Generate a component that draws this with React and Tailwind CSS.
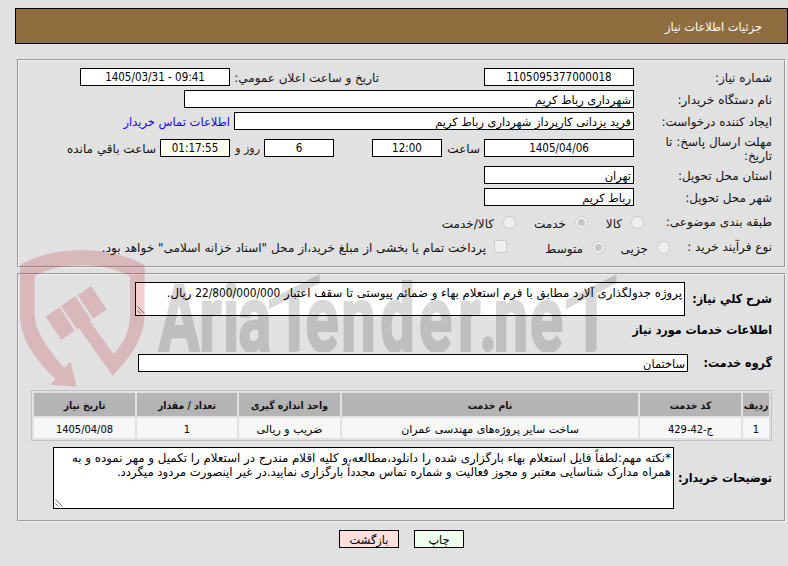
import clsx from 'clsx'

const columns = [
  { title: 'ردیف', value: '1', width: 'w-[26px]', numeric: true },
  { title: 'کد خدمت', value: 'ج-42-429', width: 'w-[101px]', numeric: true },
  { title: 'نام خدمت', value: 'ساخت سایر پروژه‌های مهندسی عمران', width: 'w-[296px]' },
  { title: 'واحد اندازه گیری', value: 'ضریب و ریالی', width: 'w-[101px]' },
  { title: 'تعداد / مقدار', value: '1', width: 'w-[100px]', numeric: true },
  { title: 'تاریخ نیاز', value: '1405/04/08', width: 'w-[101px]', numeric: true },
]

function Panel({ className, children }) {
  return (
    <div className={clsx('border border-t-[#9a9a9a] border-l-[#9a9a9a] border-b-[#f0f0f0] border-r-[#f0f0f0]', className)}>
      <div className="h-full border border-t-[#f0f0f0] border-l-[#f0f0f0] border-b-[#9a9a9a] border-r-[#9a9a9a] pr-3">
        {children}
      </div>
    </div>
  )
}

function Label({ className, children }) {
  return <div className={clsx('shrink-0 whitespace-nowrap', className || 'pt-[2px]')}>{children}</div>
}

function BoldLabel({ className, children }) {
  return (
    <div className={clsx("shrink-0 whitespace-nowrap font-['DejaVu_Sans_Condensed','DejaVu_Sans',sans-serif] text-[12.4px] font-bold text-black", className)}>
      {children}
    </div>
  )
}

function Field({ className, center, children }) {
  return (
    <div
      className={clsx(
        'h-[18px] shrink-0 border border-black text-black leading-[16px] whitespace-nowrap',
        center ? "text-center font-['DejaVu_Sans_Condensed','DejaVu_Sans',sans-serif] text-[11.5px]" : 'px-[2px] pt-px text-[11.4px]',
        className
      )}
    >
      {children}
    </div>
  )
}

function Radio({ checked }) {
  return (
    <span className="flex size-[13px] shrink-0 items-center justify-center rounded-full border border-[#cbcbcb] bg-[#efefef]">
      {checked && <span className="size-[7px] rounded-full bg-[#c6c6c6]" />}
    </span>
  )
}

function Grip() {
  return (
    <svg className="absolute bottom-px left-px" width="8" height="8" viewBox="0 0 8 8" stroke="#555" strokeWidth="0.8">
      <path d="M0.5 0.5L7.5 7.5M0.5 4.5L3.5 7.5" />
    </svg>
  )
}

function Watermark() {
  return (
    <svg className="pointer-events-none absolute inset-0" width="788" height="566" viewBox="0 0 788 566">
      <clipPath id="baseline">
        <rect x="150" y="265" width="480" height="87" />
      </clipPath>
      <g transform="translate(0 240) scale(0.33333)" fill="#b00010" fillOpacity="0.18">
        <path d="M60 75Q140 30 245 30Q350 30 434 75V225Q434 310 338 407L237 265L231 268L183 198L226 168L274 240L270 245L341 342Q390 290 390 225V108Q325 75 245 75Q165 75 104 108V225Q104 285 193 384L212 365L230 440L152 434L166 416Q60 320 60 225Z" />
        <path d="M137 230L179 202L224 272L184 300Z" />
        <path d="M233 166L273 137L320 208L280 236Z" />
      </g>
      <g
        opacity="0.15"
        clipPath="url(#baseline)"
        fill="#000"
        stroke="#000"
        strokeWidth="2.5"
        strokeLinejoin="round"
        direction="ltr"
        fontFamily="Roboto, 'Liberation Sans', sans-serif"
        fontWeight="700"
        fontSize="93"
      >
        <text transform="translate(0 350.5) scale(0.66 1)" x="240 302 338 361">Aria</text>
        <text transform="translate(267 367) skewY(-27) scale(0.96 1)" strokeWidth="0" fontWeight="500">T</text>
        <text transform="translate(0 350.5) scale(0.66 1)" x="463 517 576 635 694 726 748 803">ender.ne</text>
        <text transform="translate(564 367) skewY(-27) scale(0.96 1)" strokeWidth="0" fontWeight="500">T</text>
      </g>
    </svg>
  )
}

export default function App() {
  return (
    <div dir="rtl" className="relative h-[566px] w-[788px] overflow-hidden bg-[#e1e1e1] pt-2 font-['DejaVu_Sans',sans-serif] text-[12px] leading-[14px] text-[#111]">
      <div className="flex h-9 w-[773px] items-center border border-black bg-[#8f6d3f] pr-[25px] pt-[2px] text-[11.4px] text-white">
        جزئیات اطلاعات نیاز
      </div>

      {/* Request info */}
      <Panel className="mt-[15px] mr-[2px] h-[209px] w-[769px]">
        <div className="flex items-center pt-[7px]">
          <Label className="w-[138px] pt-px">شماره نیاز:</Label>
          <Field center className="w-[150px] bg-white">1105095377000018</Field>
          <Label className="mr-[105px] w-[149px] pt-px">تاریخ و ساعت اعلان عمومي:</Label>
          <Field center className="w-[150px] bg-white"><span dir="ltr">1405/03/31 - 09:41</span></Field>
        </div>
        <div className="mt-1 flex h-[18px] items-center">
          <Label className="w-[138px] pt-[2px]">نام دستگاه خریدار:</Label>
          <Field className="w-[450px] bg-white">شهرداری رباط کریم</Field>
        </div>
        <div className="mt-1 flex h-[18px] items-center">
          <Label className="w-[138px] pt-[2px]">ایجاد کننده درخواست:</Label>
          <Field className="w-[400px] bg-white">فرید یزدانی کارپرداز شهرداری رباط کریم</Field>
          <a className="mr-1 pt-[2px] whitespace-nowrap text-[11.5px] text-[#1a00ff]">اطلاعات تماس خریدار</a>
        </div>
        <div className="mt-[4px] flex h-[28px] items-center">
          <Label className="w-[138px] pt-[2px]">مهلت ارسال پاسخ: تا<br />تاریخ:</Label>
          <Field center className="w-[150px] bg-white">1405/04/06</Field>
          <Label className="mr-1 w-[38px] pt-[2px]">ساعت</Label>
          <Field center className="w-[70px] bg-white">12:00</Field>
          <Field center className="mr-[38px] w-[70px] bg-white">6</Field>
          <Label className="mr-1 w-[30px] pt-[2px] text-[11px]">روز و</Label>
          <Field center className="w-[70px] bg-[#fffff0]">01:17:55</Field>
          <Label className="mr-1 pt-[2px]">ساعت باقي مانده</Label>
        </div>
        <div className="mt-1 flex h-[18px] items-center">
          <Label className="w-[138px] pt-[2px]">استان محل تحویل:</Label>
          <Field className="w-[150px] bg-white">تهران</Field>
        </div>
        <div className="mt-1 flex h-[18px] items-center">
          <Label className="w-[138px] pt-[2px]">شهر محل تحویل:</Label>
          <Field className="w-[150px] bg-white">رباط کریم</Field>
        </div>
        <div className="mt-[6px] flex h-[20px] items-center">
          <Label className="w-[128px]">طبقه بندی موضوعی:</Label>
          <Radio />
          <Label className="mr-[9px] w-[34px] pt-1">کالا</Label>
          <Radio checked />
          <Label className="mr-[9px] w-[50px] pt-1">خدمت</Label>
          <Radio />
          <Label className="mr-[9px] pt-1">کالا/خدمت</Label>
        </div>
        <div className="mt-[5px] flex h-[20px] items-center">
          <Label className="w-[102px]">نوع فرآیند خرید :</Label>
          <Radio />
          <Label className="mr-[9px] w-[43px] pt-1">جزیی</Label>
          <Radio checked />
          <Label className="mr-[9px] w-[76px] pt-1">متوسط</Label>
          <span className="mb-[2px] size-[13px] rounded-[2px] border border-[#cbcbcb] bg-[#efefef]" />
          <Label className="mr-2 pt-[2px] text-[12.05px]">پرداخت تمام یا بخشی از مبلغ خرید،از محل "اسناد خزانه اسلامی" خواهد بود.</Label>
        </div>
      </Panel>

      {/* Services and buyer notes */}
      <Panel className="mt-[5px] mr-[2px] h-[249px] w-[769px]">
        <div className="flex items-center pt-[7px]">
          <BoldLabel className="w-[87px]">شرح کلي نیاز:</BoldLabel>
          <div className="relative h-[34px] w-[550px] border border-black bg-white p-[2px] pt-[3px] text-[11.75px] whitespace-nowrap text-black">
            پروژه جدولگذاری آلارد مطابق با فرم استعلام بهاء و ضمائم پیوستی تا سقف اعتبار <span className="font-['DejaVu_Sans_Condensed'] text-[11.8px]">22/800/000/000</span> ریال.
            <Grip />
          </div>
        </div>
        <BoldLabel className="mt-[7px]">اطلاعات خدمات مورد نیاز</BoldLabel>
        <div className="mt-[17px] flex items-center">
          <BoldLabel className="w-[84px]">گروه خدمت:</BoldLabel>
          <Field className="w-[550px] bg-white">ساختمان</Field>
        </div>

        <div className="mt-[18px] flex h-[51px] w-[741px] gap-[2px] border border-[#c0c0c0] p-[2px] text-center">
          {columns.map((col) => (
            <div key={col.title} className={clsx('flex shrink-0 flex-col gap-[2px] whitespace-nowrap', col.width)}>
              <div className="flex h-[23px] items-center justify-center bg-[#b4b4b4] pt-px font-['DejaVu_Sans_Condensed'] text-[10.3px] font-bold">{col.title}</div>
              <div className={clsx('flex h-[20px] items-center justify-center bg-[#f7f7f7] pt-[3px] text-[11px] text-black', col.numeric && "font-['DejaVu_Sans_Condensed']")}>{col.value}</div>
            </div>
          ))}
        </div>

        <div className="mt-[6px] flex items-center">
          <BoldLabel className="w-[98px]">توضیحات خریدار:</BoldLabel>
          <div className="relative h-[62px] w-[621px] border border-black bg-white px-[2px] pt-[3px] whitespace-nowrap text-black">
            <p className="text-[11.83px]">*نکته مهم:لطفاً فایل استعلام بهاء بارگزاری شده را دانلود،مطالعه،و کلیه اقلام مندرج در استعلام را تکمیل و مهر نموده و به</p>
            <p className="text-[11.68px]">همراه مدارک شناسایی معتبر و مجوز فعالیت و شماره تماس مجدداً بارگزاری نمایید.در غیر اینصورت مردود میگردد.</p>
            <Grip />
          </div>
        </div>
      </Panel>

      <div className="mt-2 mr-[324px] flex gap-[15px] text-[11.4px] text-black">
        <button className="h-[18px] w-[50px] border border-black bg-[#eeffee] pt-px leading-4">چاپ</button>
        <button className="h-[18px] w-[60px] border border-black bg-[#ffdede] pt-px leading-4">بازگشت</button>
      </div>
      <Watermark />
    </div>
  )
}
